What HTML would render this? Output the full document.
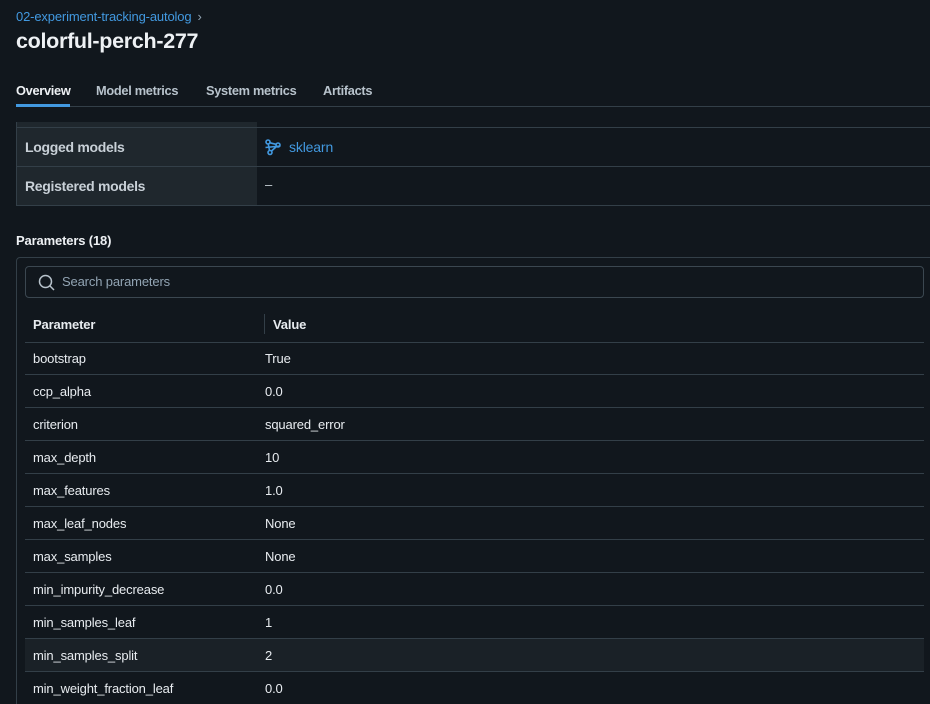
<!DOCTYPE html>
<html><head><style>
*{box-sizing:border-box;margin:0;padding:0}
html,body{width:930px;height:704px;overflow:hidden}
body{background:#11171d;font-family:"Liberation Sans",sans-serif;color:#e8ecf0;position:relative;font-size:13px;letter-spacing:-0.15px}
.a{position:absolute}
.bc{left:16px;top:9px;color:#4299e0;font-size:13px}
.bc span{color:#92a4b3;margin-left:6px}
h1{position:absolute;left:16px;top:29px;font-size:21.5px;font-weight:bold;color:#eef1f4;letter-spacing:-0.3px}
.tab{top:83px;font-size:12.8px;font-weight:bold;color:#b8c3cc;letter-spacing:-0.3px}
.line{background:#333f48;height:1px}
.lab{left:17px;width:240px;background:#1f272d;font-weight:bold;color:#c8d0d7;font-size:14px;padding-left:8px;letter-spacing:-0.3px}
.row{position:absolute;left:25px;width:899px;height:33px;border-bottom:1px solid #333f48;font-size:13px;color:#e8ecf0}
.row div{position:absolute;top:9px}
.row .k{left:8px}.row .v{left:240px}
</style></head><body>
<div class="a bc">02-experiment-tracking-autolog<span>›</span></div>
<h1>colorful-perch-277</h1>
<div class="a tab" style="left:16px;color:#eef1f4">Overview</div>
<div class="a tab" style="left:96px">Model metrics</div>
<div class="a tab" style="left:206px">System metrics</div>
<div class="a tab" style="left:323px">Artifacts</div>
<div class="a line" style="left:16px;top:106px;width:914px"></div>
<div class="a" style="left:16px;top:104px;width:54px;height:3px;background:#4299e0"></div>

<div class="a lab" style="top:122px;height:44px"></div>
<div class="a lab" style="top:128px;height:38px;padding-top:11px">Logged models</div>
<div class="a lab" style="top:167px;height:38px;padding-top:11px">Registered models</div>
<div class="a" style="left:16px;top:122px;width:1px;height:84px;background:#333f48"></div>
<div class="a line" style="left:16px;top:127px;width:914px"></div>
<div class="a line" style="left:16px;top:166px;width:914px"></div>
<div class="a line" style="left:16px;top:205px;width:914px"></div>
<svg class="a" style="left:264px;top:138px" width="18" height="18" viewBox="0 0 18 18" fill="none" stroke="#4299e0" stroke-width="1.6"><circle cx="4" cy="4" r="2"/><circle cx="14" cy="7" r="2"/><circle cx="6" cy="14.5" r="2"/><path d="M6 4.8l6 1.5M4.3 6l1.2 6.5M7.5 13l5-4.5M1.5 9.5l15-1.5"/></svg>
<div class="a" style="left:289px;top:139px;color:#4299e0;font-size:14px">sklearn</div>
<div class="a" style="left:265px;top:177px;color:#c8d0d7">–</div>

<div class="a" style="left:16px;top:233px;font-weight:bold;font-size:13px;color:#eef1f4">Parameters (18)</div>
<div class="a" style="left:16px;top:257px;width:930px;height:460px;border:1px solid #333f48;border-radius:4px"></div>
<div class="a" style="left:25px;top:266px;width:899px;height:32px;border:1px solid #3b4750;border-radius:4px"></div>
<svg class="a" style="left:38px;top:274px" width="17" height="17" viewBox="0 0 17 17" fill="none" stroke="#b8c3cc" stroke-width="1.5"><circle cx="7.5" cy="7.5" r="6"/><path d="M12 12l4 4"/></svg>
<div class="a" style="left:62px;top:274px;color:#92a4b3">Search parameters</div>
<div class="row" style="top:309px;height:34px"><div class="k" style="font-weight:bold;top:8px">Parameter</div><div class="v" style="left:248px;top:8px;font-weight:bold">Value</div></div>
<div class="a" style="left:264px;top:314px;width:1px;height:20px;background:#333f48"></div>
<div class="row" style="top:342px"><div class="k">bootstrap</div><div class="v">True</div></div>
<div class="row" style="top:375px"><div class="k">ccp_alpha</div><div class="v">0.0</div></div>
<div class="row" style="top:408px"><div class="k">criterion</div><div class="v">squared_error</div></div>
<div class="row" style="top:441px"><div class="k">max_depth</div><div class="v">10</div></div>
<div class="row" style="top:474px"><div class="k">max_features</div><div class="v">1.0</div></div>
<div class="row" style="top:507px"><div class="k">max_leaf_nodes</div><div class="v">None</div></div>
<div class="row" style="top:540px"><div class="k">max_samples</div><div class="v">None</div></div>
<div class="row" style="top:573px"><div class="k">min_impurity_decrease</div><div class="v">0.0</div></div>
<div class="row" style="top:606px"><div class="k">min_samples_leaf</div><div class="v">1</div></div>
<div class="row" style="top:639px;background:#1a2127"><div class="k">min_samples_split</div><div class="v">2</div></div>
<div class="row" style="top:672px"><div class="k">min_weight_fraction_leaf</div><div class="v">0.0</div></div>
</body></html>
